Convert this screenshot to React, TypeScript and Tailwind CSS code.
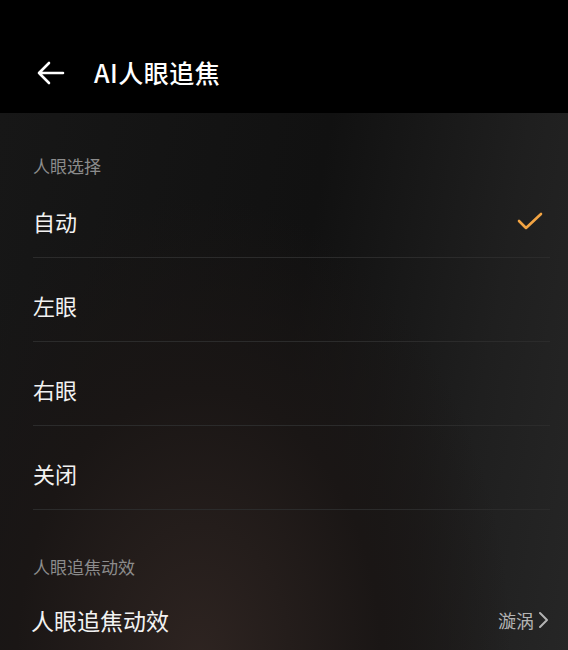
import React from "react";

const font = { fontFamily: '"Noto Sans CJK SC", "Noto Sans", sans-serif' };

function Row({ label, checked }: { label: string; checked?: boolean }) {
  return (
    <div className="pt-[10px]">
      <div className="flex h-[74px] items-center justify-between border-b border-[#2b2b2b]">
        <span className="text-[22px] leading-none text-[#f2f2f2]">{label}</span>
        {checked && (
          <svg width="28" height="24" viewBox="0 0 28 24" className="mr-[6px]">
            <path d="M3 12 L10 19 L25 5" fill="none" stroke="#f2a443" strokeWidth="2.6" strokeLinecap="round" strokeLinejoin="round" />
          </svg>
        )}
      </div>
    </div>
  );
}

export default function App() {
  return (
    <div style={font} className="flex h-[650px] w-[568px] flex-col overflow-hidden bg-black">
      <div className="flex h-[113px] shrink-0 items-center bg-black pl-[36px] pt-[32px]">
        <svg width="30" height="26" viewBox="0 0 30 26">
          <path d="M3 13 H27 M13 3 L3 13 L13 23" fill="none" stroke="#ffffff" strokeWidth="2.6" strokeLinecap="round" strokeLinejoin="round" />
        </svg>
        <span className="ml-[28px] text-[25px] font-medium leading-none tracking-[0.5px] text-white">AI人眼追焦</span>
      </div>
      <div className="flex-1 bg-[radial-gradient(ellipse_at_35%_100%,#2e2421_0%,#1a1615_35%,transparent_60%),linear-gradient(100deg,#171717_0%,#111111_50%,#1f1f1f_80%,#262626_100%)] pl-[33px] pr-[18px] pt-[41px]">
        <div className="h-[24px] text-[17px] leading-[24px] text-[#8c8c8c]">人眼选择</div>
        <div className="-mt-[4px]">
          <Row label="自动" checked />
          <Row label="左眼" />
          <Row label="右眼" />
          <Row label="关闭" />
        </div>
        <div className="mt-[45px] h-[24px] text-[17px] leading-[24px] text-[#8c8c8c]">人眼追焦动效</div>
        <div className="flex h-[82px] items-center justify-between">
          <span className="-ml-[2px] text-[23px] leading-none text-[#f2f2f2]">人眼追焦动效</span>
          <span className="flex items-center text-[18px] leading-none text-[#b3b3b3]">
            漩涡
            <svg width="14" height="20" viewBox="0 0 14 20" className="ml-[2px]">
              <path d="M4 3 L11 10 L4 17" fill="none" stroke="#b3b3b3" strokeWidth="2" strokeLinecap="round" strokeLinejoin="round" />
            </svg>
          </span>
        </div>
      </div>
    </div>
  );
}
